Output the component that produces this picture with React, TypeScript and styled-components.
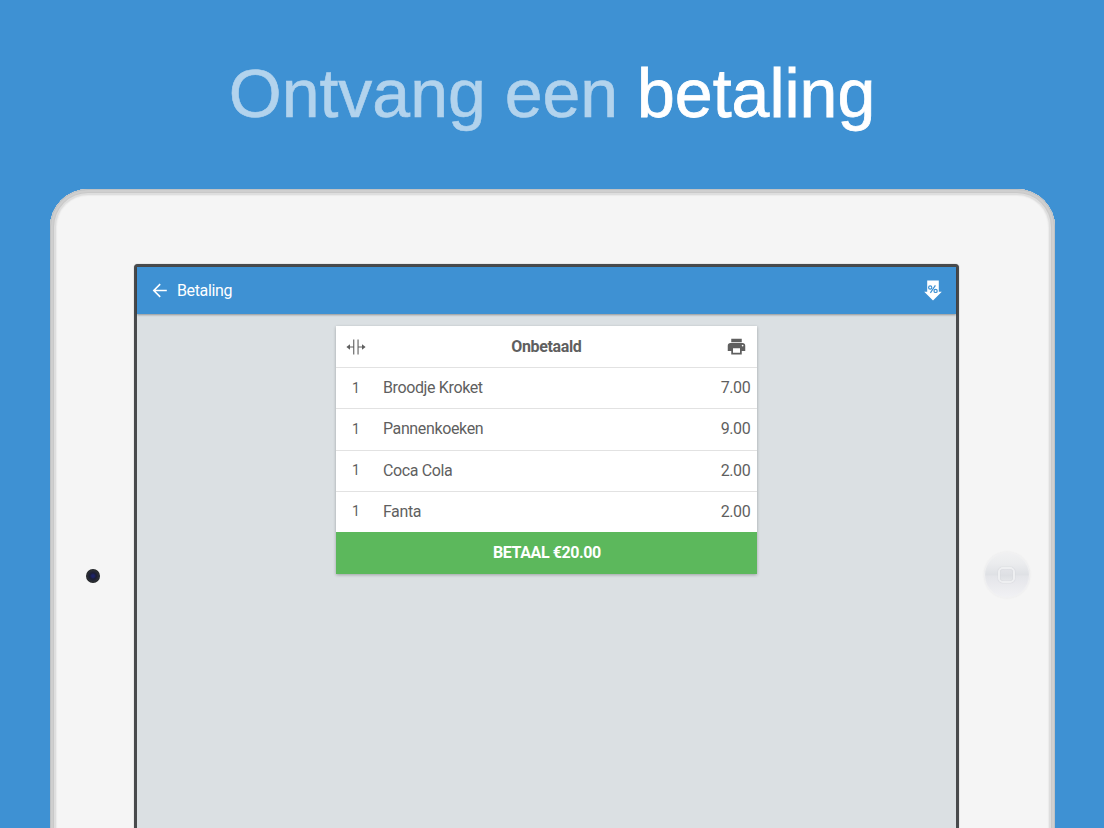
import styled, { createGlobalStyle } from "styled-components";

const GlobalStyle = createGlobalStyle`
  * {
    box-sizing: border-box;
  }
  body {
    margin: 0;
    background: #3e91d3;
    overflow: hidden;
  }
`;

const Page = styled.div`
  width: 1104px;
  height: 828px;
  overflow: hidden;
  display: flex;
  flex-direction: column;
  background: #3e91d3;
  font-family: Roboto, sans-serif;
`;

const Title = styled.h1`
  flex: none;
  margin: 0;
  height: 189px;
  padding-top: 54px;
  text-align: center;
  font: 400 68px/78px "Liberation Sans", Arial, sans-serif;
  color: #b2d3ed;
  -webkit-text-stroke: 0.6px currentColor;
`;

const Strong = styled.span`
  color: #fff;
  -webkit-text-stroke: 0.8px #fff;
`;

const Tablet = styled.div`
  flex: none;
  width: 1005px;
  height: 720px;
  margin-left: 50px;
  border-radius: 38px;
  background: #f5f5f5;
  box-shadow: inset 0 0 0 1px #bfc2c4, inset 0 0 0 3px #cfcfcf,
    inset 0 0 0 4px #c9c9c9, inset 0 0 0 6px #dedede, inset 0 0 1px 7px #ebebeb;
  display: flex;
`;

const Side = styled.div<{ width: number; top: number }>`
  width: ${(props) => props.width}px;
  padding-top: ${(props) => props.top}px;
  display: flex;
  justify-content: center;
`;

const Camera = styled.div`
  width: 14px;
  height: 14px;
  margin-left: 2px;
  border-radius: 50%;
  background: radial-gradient(circle, #1d2367 0 12%, #1b1d35 32%, #2b2e33 58%, #17191b 75%);
`;

const HomeButton = styled.div`
  width: 46px;
  height: 46px;
  border-radius: 50%;
  display: flex;
  align-items: center;
  justify-content: center;
  background: linear-gradient(#f1f1f2 0%, #ebecee 25%, #dfe1e5 49%, #e4e5e9 53%, #f2f2f5 100%);
  box-shadow: inset 0 0 1px 1px #f1f1f2, 0 0 2px #e6e6e6;
`;

const HomeSquare = styled.div`
  width: 17px;
  height: 16px;
  border: 2px solid #eeeff1;
  border-radius: 5px;
  background: linear-gradient(#e3e4e8, #dddfe3 55%, #e6e7ea);
  box-shadow: 0 0 1px #b9bcc2, inset 0 0 1px #bcbfc5;
`;

const Screen = styled.div`
  width: 825px;
  height: 640px;
  margin-top: 75px;
  border: 3px solid #484a4c;
  border-radius: 4px;
  background: #dbe0e3;
  box-shadow: 0 0 1px #777;
`;

const Toolbar = styled.header`
  height: 47px;
  padding: 0 14px;
  display: flex;
  align-items: center;
  background: #3e91d3;
  color: #fff;
  box-shadow: 0 1px 2px rgba(0, 0, 0, 0.35);
  svg {
    display: block;
  }
`;

const ToolbarTitle = styled.div`
  flex: 1;
  margin-left: 8px;
  padding-bottom: 1px;
  font-size: 16px;
  letter-spacing: -0.36px;
`;

const Bill = styled.main`
  width: 421px;
  margin: 12px 0 0 199.4px;
  background: #fff;
  box-shadow: 0 1px 3px rgba(0, 0, 0, 0.28);
  color: #5f5f5f;
  font-size: 16px;
  letter-spacing: -0.36px;
`;

const BillHeader = styled.div`
  height: 41px;
  padding: 0 10px;
  display: flex;
  align-items: center;
  justify-content: space-between;
  font-weight: 700;
`;

const BillRow = styled.div`
  height: 41.25px;
  padding: 0 7px 1px 15.5px;
  border-top: 1px solid #e2e2e2;
  display: flex;
  align-items: center;
`;

const Amount = styled.span`
  width: 31px;
  font-size: 14px;
`;

const Name = styled.span`
  flex: 1;
`;

const PayButton = styled.button`
  display: block;
  width: 100%;
  height: 41.5px;
  padding: 0;
  border: 0;
  background: #5cb85c;
  color: #fff;
  font: 700 16px Roboto, sans-serif;
  letter-spacing: -0.42px;
`;

const items = [
  { amount: 1, name: "Broodje Kroket", price: "7.00" },
  { amount: 1, name: "Pannenkoeken", price: "9.00" },
  { amount: 1, name: "Coca Cola", price: "2.00" },
  { amount: 1, name: "Fanta", price: "2.00" },
];

function BackIcon() {
  return (
    <svg width="18" height="18" viewBox="0 0 18 18" fill="none" stroke="#fff" strokeWidth="1.6">
      <path d="M15.8 8.5H3.2M9.2 2.1 2.8 8.5l6.4 6.4" />
    </svg>
  );
}

function DiscountIcon() {
  return (
    <svg width="18" height="21" viewBox="0 0 18 21">
      <path d="M3.2 .5h11.6v11.3h3L9 20.5.2 11.8h3z" fill="#fff" />
      <g fill="none" stroke="#3e91d3" strokeWidth="1.2">
        <circle cx="6.2" cy="7.5" r="1.6" />
        <circle cx="11.6" cy="10.9" r="1.6" />
        <path d="M11.4 5.4 6.4 12.8" />
      </g>
    </svg>
  );
}

function SplitIcon() {
  return (
    <svg width="20" height="16" viewBox="0 0 20 16" fill="#5f5f5f">
      <path d="M7.2 .5h1.1v15H7.2zM11.5 .5h1.1v15h-1.1zM3 7.4h4.5v1.2H3zM12.5 7.4H17v1.2h-4.5z" />
      <path d="M.4 8 4 5.2v5.6zM19.6 8 16 5.2v5.6z" />
    </svg>
  );
}

function PrintIcon() {
  return (
    <svg width="21" height="21" viewBox="0 0 24 24" fill="#5f5f5f">
      <path d="M19 8H5c-1.66 0-3 1.34-3 3v6h4v4h12v-4h4v-6c0-1.66-1.34-3-3-3zm-3 11H8v-5h8v5zm3-7c-.55 0-1-.45-1-1s.45-1 1-1 1 .45 1 1-.45 1-1 1zm-1-9H6v4h12V3z" />
    </svg>
  );
}

function App() {
  return (
    <>
      <GlobalStyle />
      <Page>
        <Title>
          Ontvang een <Strong>betaling</Strong>
        </Title>
        <Tablet>
          <Side width={84} top={380}>
            <Camera />
          </Side>
          <Screen>
            <Toolbar>
              <BackIcon />
              <ToolbarTitle>Betaling</ToolbarTitle>
              <DiscountIcon />
            </Toolbar>
            <Bill>
              <BillHeader>
                <SplitIcon />
                <span>Onbetaald</span>
                <PrintIcon />
              </BillHeader>
              {items.map((item) => (
                <BillRow key={item.name}>
                  <Amount>{item.amount}</Amount>
                  <Name>{item.name}</Name>
                  <span>{item.price}</span>
                </BillRow>
              ))}
              <PayButton>BETAAL €20.00</PayButton>
            </Bill>
          </Screen>
          <Side width={95} top={363}>
            <HomeButton>
              <HomeSquare />
            </HomeButton>
          </Side>
        </Tablet>
      </Page>
    </>
  );
}

export default App;
